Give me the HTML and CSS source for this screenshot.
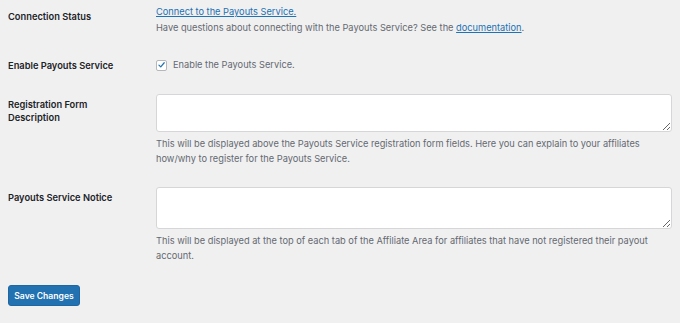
FILE: index.html
```html
<!DOCTYPE html>
<html lang="en">
<head>
  <meta charset="UTF-8">
  <meta name="viewport" content="width=device-width, initial-scale=1.0">
  <title>Payouts Service Settings</title>
  <link rel="stylesheet" href="styles.css">
</head>
<body>
  <form class="settings-form">
    <div class="form-row row-status">
      <div class="row-label">Connection Status</div>
      <div class="row-field">
        <a href="#" class="connect-link">Connect to the Payouts Service.</a>
        <p class="field-text">Have questions about connecting with the Payouts Service? See the <a href="#">documentation</a>.</p>
      </div>
    </div>

    <div class="form-row row-enable">
      <div class="row-label">Enable Payouts Service</div>
      <div class="row-field">
        <label class="check-label">
          <span class="checkbox">
            <svg viewBox="0 0 12 12" width="10" height="10"><path d="M2.6 6.2 L5 8.6 L9.6 3" fill="none" stroke="#2271b1" stroke-width="1.6" stroke-linecap="round" stroke-linejoin="round"/></svg>
          </span>
          Enable the Payouts Service.
        </label>
      </div>
    </div>

    <div class="form-row">
      <label class="row-label" for="regDescription">Registration Form Description</label>
      <div class="row-field">
        <textarea id="regDescription" class="text-box box-short"></textarea>
        <p class="description">This will be displayed above the Payouts Service registration form fields. Here you can explain to your affiliates how/why to register for the Payouts Service.</p>
      </div>
    </div>

    <div class="form-row">
      <label class="row-label" for="serviceNotice">Payouts Service Notice</label>
      <div class="row-field">
        <textarea id="serviceNotice" class="text-box box-tall"></textarea>
        <p class="description">This will be displayed at the top of each tab of the Affiliate Area for affiliates that have not registered their payout account.</p>
      </div>
    </div>

    <p class="submit">
      <button type="button" class="btn-primary">Save Changes</button>
    </p>
  </form>
</body>
</html>
```

FILE: styles.css
```css
:root {
  --bg-color: #f0f0f1;
  --text-color: #1d2327;
  --muted-color: #646970;
  --link-color: #2271b1;
  --border-color: #d6d6d8;
}

* {
  box-sizing: border-box;
  margin: 0;
  padding: 0;
}

body {
  font-family: Inter, "Noto Sans", sans-serif;
  background-color: var(--bg-color);
  color: var(--text-color);
  font-size: 9.25px;
  padding: 0 8px;
}

a {
  color: var(--link-color);
}

.form-row {
  display: grid;
  grid-template-columns: 148px 1fr;
  padding: 10px 0 11px;
}

.row-status {
  padding-top: 4px;
}

.row-label {
  display: block;
  font-size: 9.3px;
  font-weight: 600;
  line-height: 13px;
  padding-top: 4px;
  padding-right: 20px;
}

.row-status .row-label {
  padding-top: 5.5px;
}

.row-enable .row-label {
  padding-top: 1.5px;
}

.connect-link,
.field-text {
  display: block;
  line-height: 16px;
}

.check-label {
  display: flex;
  align-items: center;
  gap: 6px;
  line-height: 16px;
  color: var(--muted-color);
}

.checkbox {
  width: 11px;
  height: 11px;
  border: 1px solid #b5b7ba;
  border-radius: 2px;
  background-color: #fff;
  display: flex;
  align-items: center;
  justify-content: center;
}

.field-text {
  color: var(--muted-color);
}

.text-box {
  display: block;
  width: 100%;
  border: 1px solid var(--border-color);
  border-radius: 3px;
  background-color: #fff;
  font-family: inherit;
  resize: vertical;
}

.box-short {
  height: 38px;
}

.box-tall {
  height: 42px;
}

.description {
  color: var(--muted-color);
  line-height: 15px;
  margin-top: 4px;
}

.submit {
  padding-top: 11px;
}

.btn-primary {
  background-color: var(--link-color);
  border: 1px solid #1e67a3;
  border-radius: 3px;
  color: #fff;
  font-family: inherit;
  font-size: 8.6px;
  font-weight: 600;
  width: 72px;
  height: 21px;
  cursor: pointer;
}
```
